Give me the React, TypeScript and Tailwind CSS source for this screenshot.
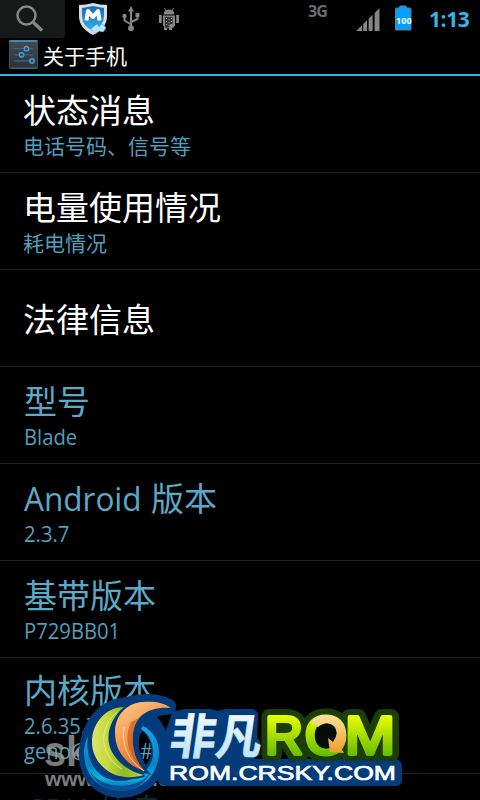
import clsx from "clsx"

/******************************************************************************
                              Data
******************************************************************************/

interface Item {
  latin?: string
  title: string
  lines?: string[]
  cjk?: boolean
  info?: boolean
}

const ITEMS: Item[] = [
  { title: "状态消息", lines: ["电话号码、信号等"], cjk: true },
  { title: "电量使用情况", lines: ["耗电情况"], cjk: true },
  { title: "法律信息" },
  { title: "型号", lines: ["Blade"], info: true },
  { latin: "Android", title: "版本", lines: ["2.3.7"], info: true },
  { title: "基带版本", lines: ["P729BB01"], info: true },
]

/******************************************************************************
                              Icons
******************************************************************************/

function SearchIcon() {
  return (
    <svg width="30" height="28" viewBox="0 0 30 28" fill="none" stroke="#888a88">
      <circle cx="11.5" cy="10.5" r="9" strokeWidth="2.4" />
      <path d="M18.5 17.5 27 25.5" strokeWidth="3.4" />
    </svg>
  )
}

function ShieldIcon() {
  return (
    <svg width="30" height="34" viewBox="0 0 30 34">
      <defs>
        <linearGradient id="shield" x1="0" y1="0" x2="0" y2="1">
          <stop offset="0" stopColor="#1668b8" />
          <stop offset="1" stopColor="#31b4ee" />
        </linearGradient>
      </defs>
      <path
        d="M1 3Q8 3 15 1 22 3 29 3V14Q29 26 15 33 1 26 1 14Z"
        fill="#dcdfe2"
      />
      <path
        d="M4 6Q10 5 15 4 20 5 26 6V14Q26 24 15 29 4 24 4 14Z"
        fill="url(#shield)"
      />
      <path
        d="M8.500 18.500 10 9 15 15 20 9 21.500 18.500"
        fill="none"
        stroke="#fff"
        strokeWidth="4"
        strokeLinejoin="round"
      />
      <path
        d="m13 27 6-5 2 3 4-3 3 4-3 4-4-1-4 3Z"
        fill="#b9e6f7"
        stroke="#5fb9dc"
        strokeDasharray="2 1"
      />
    </svg>
  )
}

function UsbIcon() {
  return (
    <svg width="18" height="26" viewBox="0 0 18 26" fill="#858585">
      <path d="M9 0 12 5.500H6Z" />
      <circle cx="9" cy="22.200" r="2.900" />
      <circle cx="2.500" cy="10" r="2.200" />
      <path d="M13.500 7H17.500V11H13.500Z" />
      <path
        d="M9 4V21M9 18.500 2.500 14.500V10M9 16 15.500 13V9"
        fill="none"
        stroke="#858585"
        strokeWidth="2"
      />
    </svg>
  )
}

function DebugIcon() {
  return (
    <svg width="20" height="23" viewBox="0 0 20 23" fill="#858585">
      <path d="M4.500 6.500Q5 1.500 10 1.500T15.500 6.500Z" />
      <path d="M5.500 0 7 3M14.500 0 13 3" stroke="#858585" />
      <rect x="0" y="7" width="2.800" height="8" />
      <rect x="17.200" y="7" width="2.800" height="8" />
      <path d="M4 7.500H16V18H13V22H10V18H8V22H5V18H4Z" />
      <path
        d="M5.500 8.500H14V16L10.500 20H5.500Z"
        fill="#303030"
        stroke="#999"
        strokeWidth=".6"
      />
      <path
        d="M7.500 10V19M10 11V18M12.500 10V17"
        stroke="#aaa"
        strokeDasharray="1 2"
      />
      <path d="m10 20 1-4 4 .500v3Z" />
    </svg>
  )
}

function SignalIcon() {
  return (
    <svg width="24" height="23" viewBox="0 0 24 23" fill="#858585">
      <path d="M0 23 6 17.300V23ZM7.200 16 11 12.300V23H7.200ZM12.600 10.800 16.600 6.800V23H12.600ZM18.600 5 23.500 0V23H18.600Z" />
    </svg>
  )
}

function BatteryIcon() {
  return (
    <svg width="17" height="26" viewBox="0 0 17 26">
      <path
        d="M.500 25V4Q.500 3 1.500 3H4L5 1H11L12 3H15Q16 3 16 4V25Z"
        fill="#03a0ff"
        stroke="#7d746b"
      />
      <text
        x="8.800"
        y="19"
        textAnchor="middle"
        textLength="15.500"
        fill="#fff"
        className="font-['Open_Sans'] text-[9px] font-bold"
      >
        100
      </text>
    </svg>
  )
}

function SettingsIcon() {
  return (
    <svg width="30" height="29" viewBox="0 0 30 29">
      <defs>
        <linearGradient id="tile" x1="0" y1="0" x2="0" y2="1">
          <stop offset="0" stopColor="#4a4b4d" />
          <stop offset="1" stopColor="#2d2f32" />
        </linearGradient>
      </defs>
      <rect x=".5" y=".5" width="28" height="28" rx="1" fill="url(#tile)" stroke="#245075" />
      <path d="M.500 1H28.500" stroke="#3f9fd2" strokeWidth="1.500" />
      <path d="M1 28H28" stroke="#346f9d" />
      <path d="M5 8.700H24M5 14.800H24M5 20.900H24" stroke="#286b94" strokeWidth="1.200" />
      <g fill="#294a63" stroke="#4b9ed0" strokeWidth="1.400">
        <circle cx="17.500" cy="8.700" r="2.200" />
        <circle cx="12.500" cy="14.800" r="2.200" />
        <circle cx="23" cy="20.900" r="2.200" />
      </g>
    </svg>
  )
}

/******************************************************************************
                              Components
******************************************************************************/

function StatusBar() {
  return (
    <div className="flex h-[38px]">
      <div className="h-[38px] w-[65px] rounded-br bg-[#151917] pt-[5px] pl-[15px]">
        <SearchIcon />
      </div>
      <div className="ml-[13px] pt-[2px]">
        <ShieldIcon />
      </div>
      <div className="ml-[14px] pt-[6px]">
        <UsbIcon />
      </div>
      <div className="ml-[19px] pt-[8px]">
        <DebugIcon />
      </div>
      <div className="ml-[129px] w-[20px] pt-[1px] font-['Open_Sans'] text-[16px] leading-5 font-bold tracking-[-1px] text-[#6c6c6c]">
        3G
      </div>
      <div className="ml-[28px] pt-[8px]">
        <SignalIcon />
      </div>
      <div className="ml-[15px] pt-[5px]">
        <BatteryIcon />
      </div>
      <div className="ml-[17px] font-['Open_Sans'] text-[21px] leading-[39px] font-bold tracking-[-0.4px] text-[#33b5e5]">
        1:13
      </div>
    </div>
  )
}

function TitleBar() {
  return (
    <div className="flex h-[38px] border-b-2 border-[#33b5e5] pl-[9px]">
      <div className="pt-[2px]">
        <SettingsIcon />
      </div>
      <h1 className="ml-[4px] text-[21px] leading-[36px] text-white">关于手机</h1>
    </div>
  )
}

function Row({ latin, title, lines = [], cjk, info }: Item) {
  return (
    <li
      className={clsx(
        "flex h-[97px] flex-col border-b border-[#202024]",
        info ? "pl-6" : "pl-[23px]",
        lines.length ? "pt-[14px]" : "justify-center pt-[3px]",
      )}
    >
      <div
        className={clsx(
          "flex text-[33px] leading-[42px]",
          info ? "text-[#5aa9c9]" : "text-white",
        )}
      >
        {latin && (
          <span className="w-[127px] origin-left scale-x-[.955]">{latin}</span>
        )}
        {title}
      </div>
      {lines.map((line) => (
        <p
          key={line}
          className={clsx(
            "origin-left text-[#4f9fbd]",
            cjk
              ? "text-[21px] leading-[29px]"
              : "scale-x-[.92] text-[22px] leading-[26px]",
          )}
        >
          {line}
        </p>
      ))}
    </li>
  )
}

function KernelRow() {
  return (
    <li className="h-[116px] border-b border-[#202024] pt-[12px] pl-6">
      <div className="text-[33px] leading-[42px] text-[#5aa9c9]">内核版本</div>
      <p className="origin-left scale-x-[.92] pt-[1px] text-[22px] leading-[24.500px] text-[#4f9fbd]">
        2.6.35.7-perf+
        <br />
        geno@AMD #1
      </p>
    </li>
  )
}

/** Site watermark that sits beneath the logo. */
function Watermark() {
  return (
    <svg
      className="absolute top-[735px] left-[40px]"
      width="200"
      height="65"
      viewBox="40 735 200 65"
      fill="#9c9c9c"
      opacity=".8"
    >
      <text x="44" y="766" textLength="66" lengthAdjust="spacingAndGlyphs" className="font-['Liberation_Sans'] text-[42px] font-bold">
        sky
      </text>
      <text x="45" y="786" textLength="156" lengthAdjust="spacingAndGlyphs" className="font-['Liberation_Sans'] text-[20px] font-bold">
        www.crsky.com
      </text>
    </svg>
  )
}

function Logo() {
  return (
    <svg
      className="absolute top-[690px] left-[70px]"
      width="340"
      height="110"
      viewBox="70 690 340 110"
    >
      <defs>
        <linearGradient id="lime" x1="0" y1="0" x2="1" y2="0">
          <stop offset="0" stopColor="#dbe46a" />
          <stop offset=".3" stopColor="#c5d93f" />
          <stop offset=".6" stopColor="#8fbb22" />
          <stop offset="1" stopColor="#b9d436" />
        </linearGradient>
        <linearGradient id="orange" x1="0" y1="0" x2=".6" y2="1">
          <stop offset="0" stopColor="#ffcf92" />
          <stop offset=".5" stopColor="#f59a4c" />
          <stop offset="1" stopColor="#e25c18" />
        </linearGradient>
        <linearGradient id="ring" x1="0" y1="0" x2="0" y2="1">
          <stop offset="0" stopColor="#13a9e6" />
          <stop offset=".6" stopColor="#0781c8" />
          <stop offset=".8" stopColor="#06b9e0" />
          <stop offset="1" stopColor="#07569f" />
        </linearGradient>
        <linearGradient id="ice" x1="0" y1="0" x2="0" y2="1">
          <stop offset="0" stopColor="#fff" />
          <stop offset="1" stopColor="#b5dff6" />
        </linearGradient>
        <linearGradient id="rom" gradientUnits="userSpaceOnUse" x1="0" y1="715" x2="0" y2="757">
          <stop offset="0" stopColor="#eaff00" />
          <stop offset="1" stopColor="#61b900" />
        </linearGradient>
        <linearGradient id="arrow" x1="0" y1="0" x2="0" y2="1">
          <stop offset="0" stopColor="#ffe0a0" />
          <stop offset="1" stopColor="#ed9c28" />
        </linearGradient>
      </defs>

      {/* navy backing of the ring and the wordmark */}
      <path
        fillRule="evenodd"
        d="M120 698C128 697 137 694 147 694 158 694 170 697 175 702Q178 708 173 713C168 716 162 714 157 717 166 726 170 740 168 755 165 782 143 798 120 798 96 797 79 780 79 755 79 728 94 702 120 698ZM143 731C137 736 137 753 146 765 153 757 154 742 143 731Z"
        fill="#033b7b"
      />
      <path
        d="M172 713Q172 710 176 711L185 709H211L217 711 225 709H252Q259 710 258 717L257 738 260 741V755L253 759H395Q402 760 402 767V780Q402 786 395 786H167Q158 786 158 778 158 768 166 760L163 750 166 730Z"
        fill="#033b7b"
      />

      {/* ring and crescents */}
      <path
        d="M88 736C82 748 83 762 89 773 96 785 108 791 120 791 142 791 159 774 159 752 159 741 153 731 143 726L141 729C150 735 154 745 153 755 151 771 136 781 120 781 106 781 96 773 91 762 87 753 87 744 88 736Z"
        fill="url(#ring)"
      />
      <path
        d="M89 771Q101 786 122 786 141 785 151 772 142 789 121 791 99 790 89 771Z"
        fill="#0a4f9a"
      />
      <path
        d="M124 707C107 707 92 722 92 742 92 757 102 769 113 774 123 778 134 778 144 775 130 772 118 763 112 752 104 737 110 719 124 707Z"
        fill="url(#lime)"
        stroke="#033b7b"
        strokeWidth="4"
        paintOrder="stroke"
      />
      <path d="M117 712C99 727 98 754 122 769" fill="none" stroke="#eff09a" strokeWidth="1" opacity=".8" />
      <path
        d="M171 708C163 702 153 701 143 702 126 703 115 716 115 732 115 744 119 753 126 760 132 766 138 769 145 771 138 764 134 755 133 745 132 735 133 724 141 716 149 709 160 707 171 708Z"
        fill="url(#orange)"
        stroke="#033b7b"
        strokeWidth="4"
        paintOrder="stroke"
      />
      <path d="M131 722C123 740 129 758 145 771 137 763 133 755 133 744 132 733 134 724 139 718Z" fill="#c34f17" opacity=".6" />
      <path d="M124 727Q120 755 144 771" fill="none" stroke="#ffd9b0" strokeWidth="1" />

      <text
        transform="translate(168 754) skewX(-8)"
        textLength="92"
        lengthAdjust="spacingAndGlyphs"
        fill="url(#ice)"
        stroke="url(#ice)"
        strokeWidth=".6"
        className="font-['Noto_Sans_CJK_SC'] text-[48px] font-bold"
      >
        非凡
      </text>

      {/* dark green halo is the same word drawn with a wide stroke */}
      <g
        className="font-['Liberation_Sans'] text-[53px]"
        strokeLinejoin="round"
        strokeLinecap="round"
      >
        <g fill="#1c3d08" stroke="#1c3d08" strokeWidth="16">
          <text x="265" y="754" textLength="38" lengthAdjust="spacingAndGlyphs">R</text>
          <text x="305" y="754" textLength="42" lengthAdjust="spacingAndGlyphs">O</text>
          <text x="345" y="754" textLength="50" lengthAdjust="spacingAndGlyphs">M</text>
        </g>
        <g fill="url(#rom)" stroke="url(#rom)" strokeWidth="4">
          <text x="265" y="754" textLength="38" lengthAdjust="spacingAndGlyphs">R</text>
          <text x="305" y="754" textLength="42" lengthAdjust="spacingAndGlyphs">O</text>
          <text x="345" y="754" textLength="50" lengthAdjust="spacingAndGlyphs">M</text>
        </g>
      </g>
      <ellipse cx="326" cy="736" rx="11" ry="12.500" fill="#040c03" />
      <path
        d="M311 722C316 716 322 715 328 715 339 716 346 725 346 736Q346 744 341 748L344 753 330 752 328 738 333 742Q340 732 334 726 327 720 318 727Z"
        fill="url(#arrow)"
      />
      <path d="M163 761H398V783H163Z" fill="#033b7b" />
      <text
        x="169"
        y="780"
        textLength="227"
        lengthAdjust="spacingAndGlyphs"
        fill="#fff"
        stroke="#fff"
        strokeWidth=".7"
        className="font-['Liberation_Sans'] text-[20px]"
      >
        ROM.CRSKY.COM
      </text>
    </svg>
  )
}

export default function App() {
  return (
    <main className="relative h-[800px] w-[480px] overflow-hidden bg-black font-['Open_Sans','Noto_Sans_CJK_SC',sans-serif]">
      <StatusBar />
      <TitleBar />
      <ul>
        {ITEMS.map((item) => (
          <Row key={item.title} {...item} />
        ))}
        <KernelRow />
        <li className="pt-[16px] pl-6 text-[33px] leading-[42px] text-[#11272f]">
          CPU 信息
        </li>
      </ul>
      <Watermark />
      <Logo />
    </main>
  )
}
